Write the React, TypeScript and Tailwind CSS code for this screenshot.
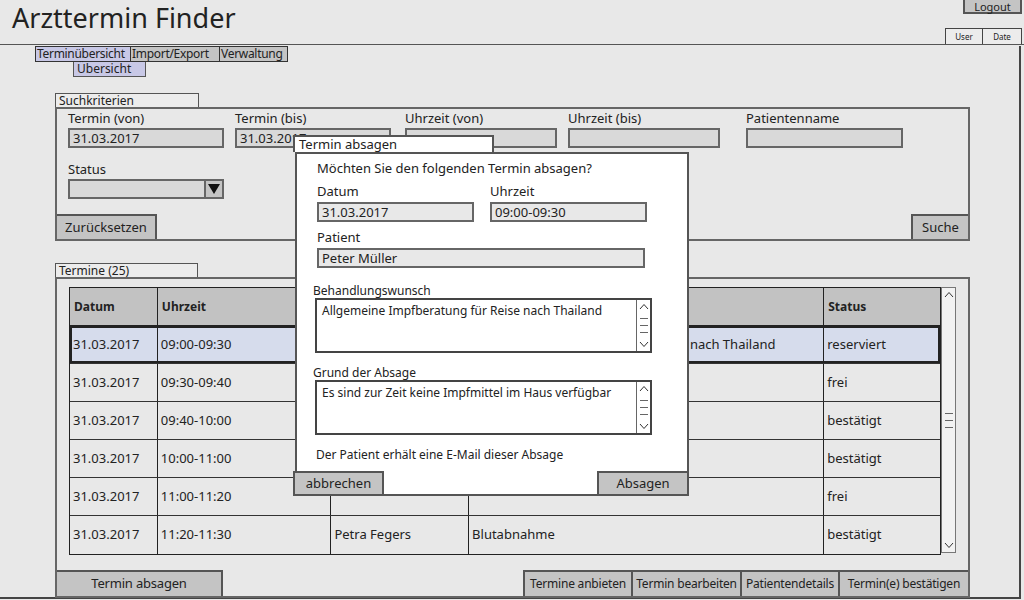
const font = { fontFamily: '"Comic Sans MS", "Noto Sans", sans-serif' };

function Field({ label, width, value = "" }: { label: string; width: string; value?: string }) {
  return (
    <div className={`flex flex-col ${width}`}>
      <div className="h-[15px] text-[13px] leading-[15px]">{label}</div>
      <div className="mt-[2px] h-[20px] border-2 border-[#666] bg-[#d9d9d9] px-[3px] text-[13px] leading-[16px]">{value}</div>
    </div>
  );
}

const rows = [
  ["31.03.2017", "09:00-09:30", "Peter Müller", "Allgemeine Impfberatung für Reise nach Thailand", "reserviert"],
  ["31.03.2017", "09:30-09:40", "", "", "frei"],
  ["31.03.2017", "09:40-10:00", "", "", "bestätigt"],
  ["31.03.2017", "10:00-11:00", "", "", "bestätigt"],
  ["31.03.2017", "11:00-11:20", "", "", "frei"],
  ["31.03.2017", "11:20-11:30", "Petra Fegers", "Blutabnahme", "bestätigt"],
];

const cols = ["w-[88px]", "w-[174px]", "w-[138px]", "w-[356px]", "w-[116px]"];

function Chevron({ up }: { up?: boolean }) {
  return (
    <svg width="10" height="7" viewBox="0 0 10 7" className={up ? "" : "rotate-180"}>
      <path d="M1 6 L5 1.5 L9 6" fill="none" stroke="#333" strokeWidth="1" />
    </svg>
  );
}

function Grip({ gap }: { gap: string }) {
  return (
    <div className={`flex flex-col ${gap}`}>
      <div className="h-px w-[8px] bg-[#666]" />
      <div className="h-px w-[8px] bg-[#666]" />
      <div className="h-px w-[8px] bg-[#666]" />
    </div>
  );
}

function ScrollBar({ h }: { h: string }) {
  return (
    <div className={`flex w-[15px] ${h} flex-col items-center justify-between border border-[#777] bg-[#f2f2f2] py-[3px]`}>
      <Chevron up />
      <Grip gap="gap-[6px]" />
      <Chevron />
    </div>
  );
}

function TextArea({ text }: { text: string }) {
  return (
    <div className="flex h-[55px] w-[337px] border-2 border-[#444] bg-white">
      <div className="flex-1 whitespace-nowrap px-[5px] pt-[3px] text-[12px] leading-[16px]">{text}</div>
      <div className="flex w-[14px] flex-col items-center justify-between border-l border-[#666] py-[3px]">
        <Chevron up />
        <Grip gap="gap-[6px]" />
        <Chevron />
      </div>
    </div>
  );
}

const btn = "border-2 border-[#555] bg-[#c4c4c4] whitespace-nowrap";

export default function App() {
  return (
    <div style={font} className="relative h-[600px] w-[1024px] overflow-hidden bg-[#e8e8e8] text-[#222]">
      {/* header */}
      <div className="flex h-[45px] border-b border-[#555]">
        <div className="pl-[12px] pt-[1px] text-[27px] leading-[34px]">Arzttermin Finder</div>
        <div className="ml-auto mr-[2px] flex flex-col items-end">
          <div className="flex h-[14px] w-[59px] items-center justify-center border-2 border-t-0 border-[#555] bg-[#c4c4c4] pt-px text-[11px] leading-[11px]">Logout</div>
          <div className="mt-auto flex">
            <div className="h-[16px] w-[38px] border border-b-0 border-[#444] bg-[#ececec] text-center text-[8px] leading-[15px]">User</div>
            <div className="h-[16px] w-[39px] border border-b-0 border-l-0 border-[#444] bg-[#ececec] text-center text-[8px] leading-[15px]">Date</div>
          </div>
        </div>
      </div>

      <div className="h-[553px] w-[1021px] border-r-2 border-b-2 border-[#444]">
        {/* tabs */}
        <div className="ml-[35px] mt-px flex h-[16px] whitespace-nowrap text-[12px] leading-[14px] tracking-[-0.3px]">
          <div className="w-[96px] border border-[#333] bg-[#c8c8e6] px-px">Terminübersicht</div>
          <div className="w-[89px] border border-l-0 border-[#333] bg-[#c4c4c4] px-px">Import/Export</div>
          <div className="w-[68px] border border-l-0 border-[#333] bg-[#c4c4c4] px-px">Verwaltung</div>
        </div>
        <div className="ml-[73px] h-[15px] w-[73px] border border-t-0 border-[#555] bg-[#c8c8e6] px-[3px] text-[12px] leading-[13px]">Übersicht</div>

        {/* Suchkriterien */}
        <div className="ml-[55px] mt-[16px] w-[915px]">
          <div className="h-[14px] w-[144px] border border-b-0 border-[#555] bg-[#ececec] px-[3px] text-[12px] leading-[13px]">Suchkriterien</div>
          <div className="flex h-[134px] flex-col border-2 border-[#666]">
            <div className="ml-[11px] mt-[2px] flex">
              <Field label="Termin (von)" width="w-[156px]" value="31.03.2017" />
              <div className="ml-[11px]"><Field label="Termin (bis)" width="w-[156px]" value="31.03.2017" /></div>
              <div className="ml-[14px]"><Field label="Uhrzeit (von)" width="w-[152px]" /></div>
              <div className="ml-[11px]"><Field label="Uhrzeit (bis)" width="w-[152px]" /></div>
              <div className="ml-[26px]"><Field label="Patientenname" width="w-[157px]" /></div>
            </div>
            <div className="ml-[11px] mt-[14px] w-[156px]">
              <div className="h-[15px] text-[13px] leading-[15px]">Status</div>
              <div className="mt-[2px] flex h-[20px] border-2 border-[#666] bg-[#d9d9d9]">
                <div className="flex-1" />
                <div className="flex w-[18px] items-center justify-center border-l-2 border-[#666] bg-[#c4c4c4]">
                  <svg width="12" height="10" viewBox="0 0 12 10"><path d="M0 0 H12 L6 10 Z" fill="#111" /></svg>
                </div>
              </div>
            </div>
            <div className="mt-auto flex items-end justify-between text-[13px]">
              <button className={`h-[25px] w-[100px] border-b-0 border-l-0 ${btn}`}>Zurücksetzen</button>
              <button className={`h-[25px] w-[57px] border-b-0 border-r-0 ${btn}`}>Suche</button>
            </div>
          </div>
        </div>

        {/* Termine */}
        <div className="ml-[55px] mt-[22px] w-[915px]">
          <div className="h-[14px] w-[143px] border border-b-0 border-[#555] bg-[#ececec] px-[3px] text-[12px] leading-[13px]">Termine (25)</div>
          <div className="flex h-[321px] flex-col border-2 border-[#666]">
            <div className="ml-[12px] mt-[8px] flex">
              <div className="w-[872px] border border-[#222]">
                <div className="flex h-[38px] border-b border-[#222] bg-[#c2c2c2] text-[12px] font-bold">
                  {["Datum", "Uhrzeit", "", "", "Status"].map((c, i) => (
                    <div key={i} className={`${cols[i]} flex items-center px-[4px] ${i < 4 ? "border-r border-[#222]" : ""}`}>{c}</div>
                  ))}
                </div>
                {rows.map((r, ri) => (
                  <div
                    key={ri}
                    className={`flex h-[38px] text-[13px] ${ri === 0 ? "bg-[#d6dcec] shadow-[inset_0_0_0_2px_#222]" : ""} ${ri < rows.length - 1 ? "border-b border-[#333]" : ""}`}
                  >
                    {r.map((c, i) => (
                      <div key={i} className={`${cols[i]} flex items-center overflow-hidden whitespace-nowrap px-[3px] ${i < 4 ? "border-r border-[#222]" : ""}`}>{c}</div>
                    ))}
                  </div>
                ))}
              </div>
              <ScrollBar h="h-[266px]" />
            </div>
            <div className="mt-auto flex items-end text-[12px] tracking-[-0.2px]">
              <button className={`h-[26px] w-[166px] border-b-0 border-l-0 text-[13px] ${btn}`}>Termin absagen</button>
              <div className="ml-auto flex">
                <button className={`h-[26px] w-[108px] border-r-0 border-b-0 ${btn}`}>Termine anbieten</button>
                <button className={`h-[26px] w-[109px] border-r-0 border-b-0 ${btn}`}>Termin bearbeiten</button>
                <button className={`h-[26px] w-[98px] border-r-0 border-b-0 ${btn}`}>Patientendetails</button>
                <button className={`h-[26px] w-[130px] border-r-0 border-b-0 ${btn}`}>Termin(e) bestätigen</button>
              </div>
            </div>
          </div>
        </div>
      </div>

      {/* dialog */}
      <div className="absolute left-[293px] top-[135px] w-[396px]">
        <div className="h-[17px] w-[201px] border-2 border-b-0 border-[#555] bg-white px-[4px] text-[13px] leading-[14px]">Termin absagen</div>
        <div className="ml-[2px] flex h-[344px] flex-col border-2 border-[#555] bg-white">
          <div className="pl-[20px] pt-[6px] text-[13px] leading-[16px]">Möchten Sie den folgenden Termin absagen?</div>
          <div className="ml-[20px] mt-[7px] flex gap-[16px]">
            <div className="w-[157px]">
              <div className="h-[16px] text-[13px] leading-[16px]">Datum</div>
              <div className="mt-[3px] h-[20px] border-2 border-[#666] bg-[#e8e8e8] px-[3px] text-[13px] leading-[16px]">31.03.2017</div>
            </div>
            <div className="w-[157px]">
              <div className="h-[16px] text-[13px] leading-[16px]">Uhrzeit</div>
              <div className="mt-[3px] h-[20px] border-2 border-[#666] bg-[#e8e8e8] px-[3px] text-[13px] leading-[16px]">09:00-09:30</div>
            </div>
          </div>
          <div className="ml-[20px] mt-[7px] w-[328px]">
            <div className="h-[16px] text-[13px] leading-[16px]">Patient</div>
            <div className="mt-[3px] h-[20px] border-2 border-[#666] bg-[#e8e8e8] px-[3px] text-[13px] leading-[16px]">Peter Müller</div>
          </div>
          <div className="ml-[16px] mt-[16px] h-[14px] text-[12px] leading-[14px]">Behandlungswunsch</div>
          <div className="ml-[18px]"><TextArea text="Allgemeine Impfberatung für Reise nach Thailand" /></div>
          <div className="ml-[16px] mt-[13px] h-[14px] text-[12px] leading-[14px]">Grund der Absage</div>
          <div className="ml-[18px]"><TextArea text="Es sind zur Zeit keine Impfmittel im Haus verfügbar" /></div>
          <div className="ml-[19px] mt-[12px] text-[12px] leading-[16px]">Der Patient erhält eine E-Mail dieser Absage</div>
        </div>
        <div className="-mt-[25px] flex justify-between text-[13px]">
          <button className={`h-[25px] w-[91px] ${btn}`}>abbrechen</button>
          <button className={`h-[25px] w-[92px] ${btn}`}>Absagen</button>
        </div>
      </div>
    </div>
  );
}
